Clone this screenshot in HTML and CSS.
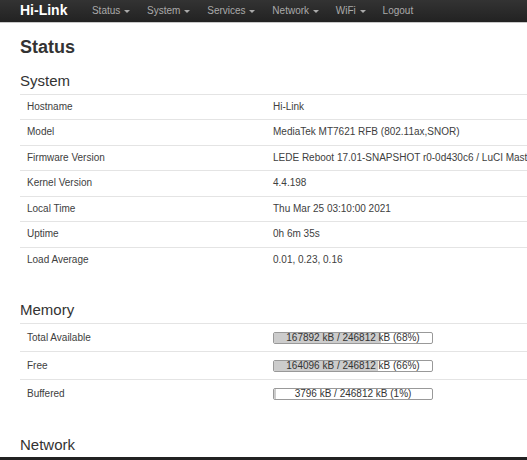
FILE: index.html
```html
<!DOCTYPE html>
<html lang="en">
<head>
  <meta charset="UTF-8" />
  <meta name="viewport" content="width=device-width, initial-scale=1.0"/>
  <title>Hi-Link - Status</title>
  <link rel="stylesheet" href="styles.css">
</head>
<body>

  <header class="navbar">
    <a class="brand" href="#">Hi-Link</a>
    <ul class="nav">
      <li><a href="#">Status <span class="caret"></span></a></li>
      <li><a href="#">System <span class="caret"></span></a></li>
      <li><a href="#">Services <span class="caret"></span></a></li>
      <li><a href="#">Network <span class="caret"></span></a></li>
      <li><a href="#">WiFi <span class="caret"></span></a></li>
      <li><a href="#">Logout</a></li>
    </ul>
  </header>

  <div class="main">
    <h2>Status</h2>

    <!-- System -->
    <div class="section">
      <h3>System</h3>
      <table class="info">
        <tr><td class="label">Hostname</td><td>Hi-Link</td></tr>
        <tr><td class="label">Model</td><td>MediaTek MT7621 RFB (802.11ax,SNOR)</td></tr>
        <tr><td class="label">Firmware Version</td><td>LEDE Reboot 17.01-SNAPSHOT r0-0d430c6 / LuCI Master (git-19.161.23508-5bff98a)</td></tr>
        <tr><td class="label">Kernel Version</td><td>4.4.198</td></tr>
        <tr><td class="label">Local Time</td><td>Thu Mar 25 03:10:00 2021</td></tr>
        <tr><td class="label">Uptime</td><td>0h 6m 35s</td></tr>
        <tr><td class="label">Load Average</td><td>0.01, 0.23, 0.16</td></tr>
      </table>
    </div>

    <!-- Memory -->
    <div class="section">
      <h3>Memory</h3>
      <table class="info memory">
        <tr>
          <td class="label">Total Available</td>
          <td><div class="bar"><div class="fill" style="width:68%"></div><span>167892 kB / 246812 kB (68%)</span></div></td>
        </tr>
        <tr>
          <td class="label">Free</td>
          <td><div class="bar"><div class="fill" style="width:66%"></div><span>164096 kB / 246812 kB (66%)</span></div></td>
        </tr>
        <tr>
          <td class="label">Buffered</td>
          <td><div class="bar"><div class="fill" style="width:1%"></div><span>3796 kB / 246812 kB (1%)</span></div></td>
        </tr>
      </table>
    </div>

    <!-- Network -->
    <div class="section">
      <h3>Network</h3>
    </div>
  </div>

  <div class="frame-bottom"></div>

</body>
</html>
```

FILE: styles.css
```css
html, body {
  margin: 0;
  padding: 0;
  overflow: hidden;
}
body {
  background-color: #fff;
  color: #404040;
  font-family: "Liberation Sans", Arial, sans-serif;
  font-size: 10px;
  width: 800px;
  height: 460px;
}
a {
  text-decoration: none;
}
.navbar {
  display: flex;
  align-items: center;
  height: 22px;
  padding-left: 20px;
  background: linear-gradient(#333, #222);
  border-bottom: 1px solid #c8c8c8;
}
.brand {
  color: #fff;
  font-size: 14px;
  font-weight: bold;
  margin-right: 16px;
  margin-top: -3px;
}
.nav {
  display: flex;
  list-style: none;
  margin: 0;
  padding: 0;
}
.nav a {
  display: block;
  padding: 0 8.5px;
  color: #aaa;
  font-size: 10px;
  line-height: 20px;
}
.caret {
  display: inline-block;
  width: 0;
  height: 0;
  margin-left: 1px;
  vertical-align: middle;
  border-top: 3px solid #aaa;
  border-left: 3px solid transparent;
  border-right: 3px solid transparent;
}
.main {
  padding: 13px 0 0 20px;
}
h2 {
  margin: 0;
  font-size: 18px;
  line-height: 22px;
  color: #333;
}
h3 {
  margin: 0 0 4px 0;
  font-size: 15px;
  line-height: 18px;
  font-weight: normal;
  color: #333;
}
.section {
  margin-top: 13.5px;
}
.section + .section {
  margin-top: 29px;
}
.info {
  width: 700px;
  border-collapse: collapse;
}
.info td {
  padding: 5px 7px;
  line-height: 14.5px;
  border-top: 1px solid #e4e4e4;
  white-space: nowrap;
  color: #404040;
}
.info td.label {
  width: 232px;
}
.memory td {
  padding: 6px 7px;
  line-height: 15px;
}
.bar {
  position: relative;
  width: 158px;
  height: 10px;
  margin: 1px 0;
  border: 1px solid #999;
  border-radius: 2px;
  background-color: #fff;
  overflow: hidden;
}
.bar .fill {
  height: 100%;
  background-color: #ccc;
}
.bar span {
  position: absolute;
  top: 0;
  left: 0;
  right: 0;
  text-align: center;
  font-size: 10px;
  line-height: 10px;
  color: #333;
}
.frame-bottom {
  position: fixed;
  left: 0;
  right: 0;
  bottom: 0;
  height: 3px;
  background-color: #222;
}
```
